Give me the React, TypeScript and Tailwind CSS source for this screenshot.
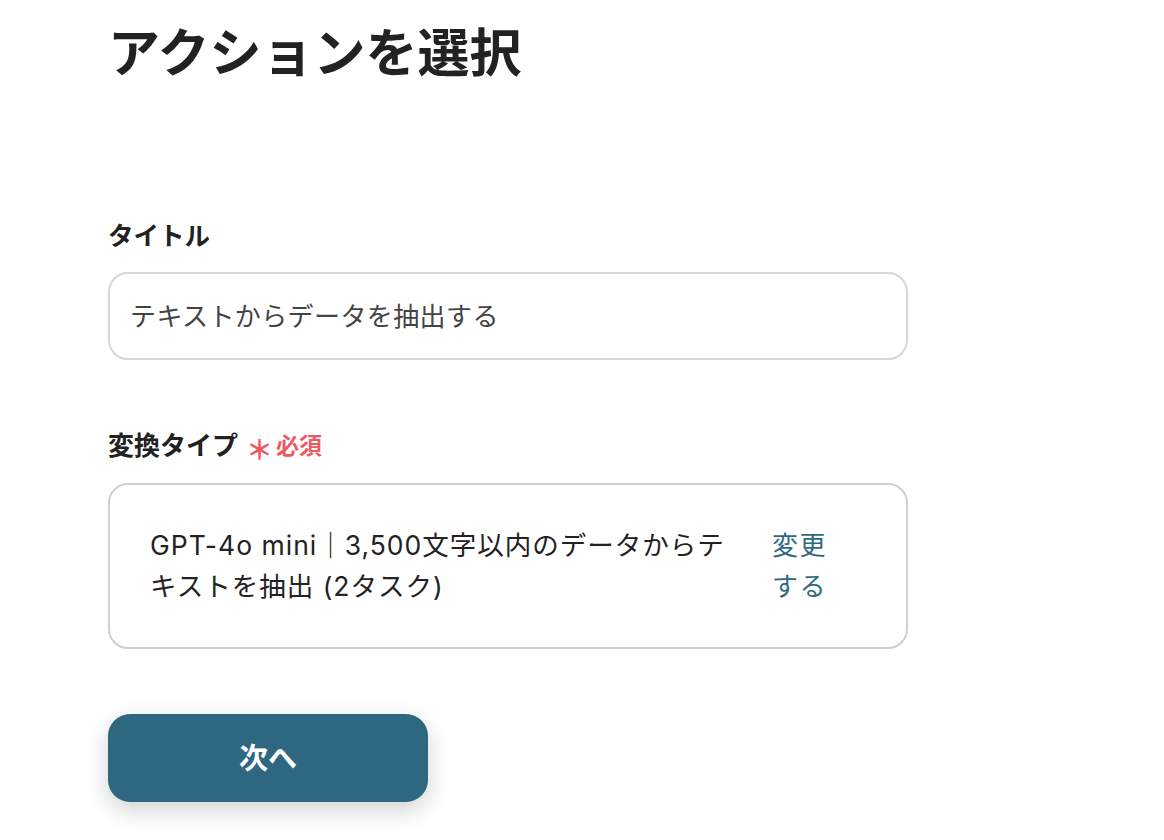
import React from 'react';

const font = { fontFamily: '"Noto Sans", "Noto Sans CJK JP", sans-serif' };
const bodyFont = { fontFamily: 'Inter, "Noto Sans CJK JP", sans-serif' };

export default function App() {
  return (
    <div className="min-h-[840px] bg-white text-[#222]" style={font}>
      <div className="pl-[108px] pt-[16px] w-[907px]">
        <h1 className="text-[52px] font-bold leading-[72px]">アクションを選択</h1>

        <div className="mt-[129px]">
          <label className="block text-[25.5px] font-bold leading-[36px]">タイトル</label>
          <div className="mt-[19px] h-[88px] w-[800px] rounded-[20px] border-2 border-[#d4d6d9] flex items-center px-[20px] text-[26px] tracking-[0.4px] text-[#444]">
            テキストからデータを抽出する
          </div>
        </div>

        <div className="mt-[67px]">
          <div className="flex items-center leading-[36px]">
            <span className="text-[26px] font-bold">変換タイプ</span>
            <span className="ml-[8px] text-[23px] font-bold text-[#ec5a62] flex items-center gap-[3px]">
              <span className="text-[27px] leading-none translate-y-[4px]">＊</span>必須
            </span>
          </div>
          <div className="mt-[20px] h-[166px] w-[800px] rounded-[20px] border-2 border-[#cfcfcf] flex items-center pl-[40px] gap-[22px]">
            <p className="w-[600px] text-[26.5px] leading-[41px] tracking-[1px] text-[#222]" style={bodyFont}>
              GPT-4o mini｜3,500文字以内のデータからテキストを抽出 (2タスク)
            </p>
            <a className="w-[58px] text-[26px] leading-[41px] tracking-[1.5px] text-[#2f6a82] shrink-0">変更する</a>
          </div>
        </div>

        <button className="mt-[65px] h-[88px] w-[320px] rounded-[22px] bg-[#2e6780] text-white text-[29px] font-bold shadow-[0_8px_24px_rgba(0,0,0,0.18)]">
          次へ
        </button>
      </div>
    </div>
  );
}
